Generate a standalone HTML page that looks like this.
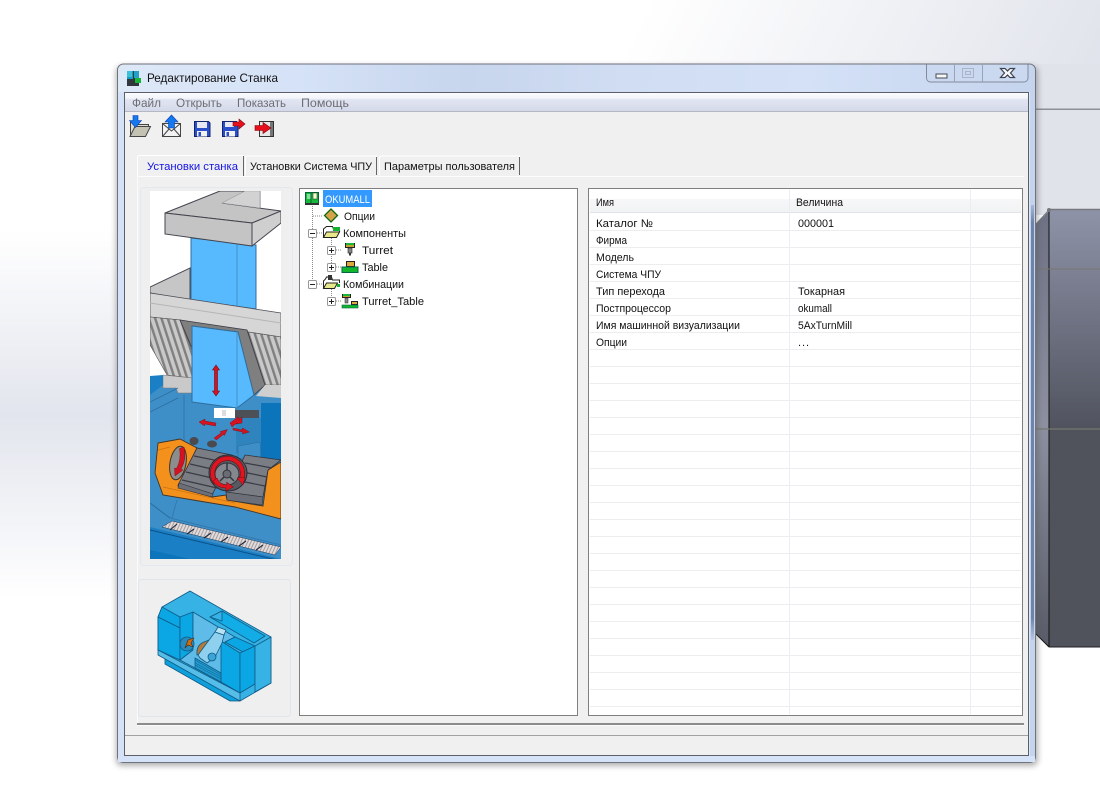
<!DOCTYPE html>
<html><head><meta charset="utf-8"><title>Редактирование Станка</title>
<style>
html,body{margin:0;padding:0;background:#fff;width:1100px;height:786px;overflow:hidden}
svg{display:block}
text{font-family:"Liberation Sans","Noto Sans CJK SC",sans-serif;font-size:11px;fill:#111}
</style></head><body>
<svg width="1100" height="786" viewBox="0 0 1100 786" xmlns="http://www.w3.org/2000/svg">
<defs>
<linearGradient id="leftbg" x1="0" y1="230" x2="0" y2="600" gradientUnits="userSpaceOnUse"><stop offset="0" stop-color="#fff"/><stop offset=".5" stop-color="#e2e5ed"/><stop offset="1" stop-color="#fff"/></linearGradient>
<linearGradient id="trbg" x1="650" y1="0" x2="1040" y2="200" gradientUnits="userSpaceOnUse"><stop offset="0" stop-color="#fff"/><stop offset="1" stop-color="#e0e3eb"/></linearGradient>
<linearGradient id="front" x1="0" y1="210" x2="0" y2="430" gradientUnits="userSpaceOnUse"><stop offset="0" stop-color="#8e93a8"/><stop offset="1" stop-color="#50535e"/></linearGradient>
<linearGradient id="side" x1="0" y1="210" x2="0" y2="640" gradientUnits="userSpaceOnUse"><stop offset="0" stop-color="#6d7184"/><stop offset=".5" stop-color="#8d90a0"/><stop offset="1" stop-color="#5a5d69"/></linearGradient>
<linearGradient id="glass" x1="117" y1="64" x2="1036" y2="120" gradientUnits="userSpaceOnUse"><stop offset="0" stop-color="#dde8f7"/><stop offset=".2" stop-color="#d5e2f7"/><stop offset=".38" stop-color="#c7d5ed"/><stop offset=".55" stop-color="#d0ddf3"/><stop offset=".75" stop-color="#d4e1f7"/><stop offset="1" stop-color="#c5d4ed"/></linearGradient>
<linearGradient id="menu" x1="0" y1="93" x2="0" y2="111" gradientUnits="userSpaceOnUse"><stop offset="0" stop-color="#fbfcfe"/><stop offset=".3" stop-color="#f2f4fa"/><stop offset=".35" stop-color="#e2e6f3"/><stop offset="1" stop-color="#d4d9ea"/></linearGradient>
<linearGradient id="hdr" x1="0" y1="190" x2="0" y2="212" gradientUnits="userSpaceOnUse"><stop offset="0" stop-color="#fff"/><stop offset=".4" stop-color="#fff"/><stop offset=".42" stop-color="#f6f7f8"/><stop offset="1" stop-color="#f2f3f4"/></linearGradient>
<linearGradient id="rframe" x1="0" y1="200" x2="0" y2="640" gradientUnits="userSpaceOnUse"><stop offset="0" stop-color="#b8c8e6"/><stop offset=".05" stop-color="#6f84ac"/><stop offset=".95" stop-color="#6f84ac"/><stop offset="1" stop-color="#b8c8e6"/></linearGradient>
<filter id="sh" x="-5%" y="-5%" width="110%" height="110%"><feGaussianBlur stdDeviation="3"/></filter>
<clipPath id="c1"><rect x="150" y="191" width="131" height="368"/></clipPath>
<pattern id="hatch" width="6" height="6" patternUnits="userSpaceOnUse" patternTransform="rotate(-18)"><rect width="6" height="6" fill="#c9c9c9"/><rect width="2.400" height="6" fill="#808080"/></pattern>
<pattern id="rail" width="3" height="3" patternUnits="userSpaceOnUse" patternTransform="rotate(25)"><rect width="3" height="3" fill="#e0dcdc"/><rect width="1" height="3" fill="#a59a9e"/></pattern>
</defs>

<!-- desktop background -->
<rect width="1100" height="786" fill="#fff"/>
<rect x="0" y="230" width="125" height="370" fill="url(#leftbg)"/>
<rect x="400" y="0" width="700" height="215" fill="url(#trbg)"/>
<rect x="1036" y="64" width="64" height="150" fill="#e1e3eb"/>
<rect x="1036" y="108.500" width="64" height="1.500" fill="#8f9096"/>
<!-- solid at right -->
<polygon points="1036,224 1049,211 1049,647 1036,634" fill="url(#side)"/>
<rect x="1049" y="210" width="51" height="437" fill="url(#front)"/>
<rect x="1049" y="430" width="51" height="217" fill="#50525c"/>
<line x1="1049" y1="209.500" x2="1100" y2="209.500" stroke="#77787c" stroke-width="1.500"/>
<line x1="1036" y1="224" x2="1049" y2="210" stroke="#77787c" stroke-width="1"/>
<line x1="1049" y1="210" x2="1049" y2="647" stroke="#111" stroke-width="1"/>
<line x1="1036" y1="634" x2="1049" y2="647" stroke="#111" stroke-width="1"/>
<line x1="1049" y1="647" x2="1100" y2="647" stroke="#222" stroke-width="1"/>
<line x1="1036" y1="269" x2="1100" y2="269" stroke="#77776f" stroke-width="1"/>
<line x1="1036" y1="429" x2="1100" y2="429" stroke="#77776f" stroke-width="1.200"/>
<circle cx="1049" cy="210" r="2" fill="#77787c"/>

<!-- window shadow and frame -->
<rect x="116" y="66" width="922" height="700" rx="6" fill="#555" opacity=".45" filter="url(#sh)"/>
<rect x="117.500" y="64" width="918" height="698.500" rx="6" fill="url(#glass)" stroke="#70737c"/>
<rect x="1031" y="205" width="3" height="435" fill="url(#rframe)"/>
<rect x="118" y="92" width="6" height="670" fill="#d4e1f6"/>
<rect x="1029" y="92" width="1" height="670" fill="#dbe6f8"/>
<rect x="118" y="756" width="917" height="6" fill="#d5e2f8"/>
<rect x="124.500" y="92.500" width="904" height="663" fill="#f0f0f0" stroke="#5c5f68"/>
<rect x="125" y="93" width="903" height="18" fill="url(#menu)"/>
<line x1="125" y1="111.500" x2="1028" y2="111.500" stroke="#b5b8c2"/>

<!-- title bar -->
<g>
<rect x="127" y="71" width="6" height="15" fill="#159bc4"/><rect x="133" y="71" width="6" height="15" fill="#2f3a33"/>
<rect x="127" y="71" width="5" height="6" fill="#3ac0d8"/><rect x="134" y="71" width="5" height="7" fill="#27a0c8"/>
<rect x="127" y="79" width="12" height="7" fill="#30363c"/><rect x="135" y="78" width="6" height="5" fill="#16b53a"/>
</g>
<text x="147" y="82" style="font-size:12px" textLength="131" lengthAdjust="spacingAndGlyphs" fill="#111">Редактирование Станка</text>
<path d="M926.500 64.500V78a4 4 0 0 0 4 4H1024a4 4 0 0 0 4-4V64.500" fill="#cbd9f0" stroke="#838a9c"/>
<line x1="954.500" y1="64" x2="954.500" y2="82" stroke="#9aa3b6"/><line x1="982.500" y1="64" x2="982.500" y2="82" stroke="#9aa3b6"/>
<rect x="936" y="74" width="11" height="4" fill="#f7f7f7" stroke="#454a58"/>
<rect x="962.500" y="68.500" width="11" height="9" fill="none" stroke="#a9b3c8"/><rect x="965.500" y="71.500" width="5" height="3" fill="none" stroke="#a9b3c8"/>
<path d="M1000.500 68.500h4.500l2.500 2.500 2.500-2.500h4.500l-4 4.500 4 4.500h-4.500l-2.500-2.500-2.500 2.500h-4.500l4-4.500z" fill="#f8f8fa" stroke="#3c4350" stroke-width="1.200"/>

<!-- menu -->
<text x="132" y="107" style="font-size:12px;fill:#6d6d72" textLength="29" lengthAdjust="spacingAndGlyphs">Файл</text>
<text x="176" y="107" style="font-size:12px;fill:#6d6d72" textLength="46" lengthAdjust="spacingAndGlyphs">Открыть</text>
<text x="237" y="107" style="font-size:12px;fill:#6d6d72" textLength="49" lengthAdjust="spacingAndGlyphs">Показать</text>
<text x="301" y="107" style="font-size:12px;fill:#6d6d72" textLength="48" lengthAdjust="spacingAndGlyphs">Помощь</text>

<!-- toolbar icons -->
<g stroke-linejoin="miter">
<!-- open -->
<path d="M130.500 136.500V122.500h6l2 2h10v3" fill="#dcdccf" stroke="#444"/>
<path d="M130 136.500l5-10h15.500l-5 10z" fill="#c4c2b2" stroke="#444"/>
<path d="M133 115.500h5v5h3.500l-6 7-6-7h3.500z" fill="#1478f0" stroke="#0a3fb0" stroke-width=".6"/>
<!-- mail -->
<rect x="162.500" y="123.500" width="18" height="13" fill="#f3f3f3" stroke="#444"/>
<path d="M162.500 123.500l9 7.500 9-7.500M162.500 136.500l7-8M180.500 136.500l-7-8" fill="none" stroke="#444"/>
<path d="M171.500 115l6.500 7h-3.500v6h-6v-6H165z" fill="#1478f0" stroke="#0a3fb0" stroke-width=".6"/>
<!-- save -->
<path d="M194.500 121.500h14l1.500 1.500v13.500h-15.500z" fill="#2b4fc9" stroke="#12236e"/>
<rect x="197" y="122" width="10" height="6" fill="#e8e8f4"/>
<rect x="197" y="131" width="10" height="5.500" fill="#f2f2f2"/><rect x="198.500" y="132" width="2.500" height="4" fill="#2b4fc9"/>
<!-- save as -->
<path d="M222.500 121.500h14l1.500 1.500v13.500h-15.500z" fill="#2b4fc9" stroke="#12236e"/>
<rect x="225" y="122" width="9" height="5" fill="#e8e8f4"/>
<rect x="225" y="131" width="10" height="5.500" fill="#f2f2f2"/><rect x="226.500" y="132" width="2.500" height="4" fill="#2b4fc9"/>
<path d="M233 122h6v-3l6 5-6 5v-3h-6z" fill="#e8101c" stroke="#7a0a10" stroke-width=".6"/>
<!-- exit -->
<rect x="259.500" y="121.500" width="14" height="15" fill="#e7e7e7" stroke="#333"/>
<rect x="270" y="122" width="3" height="14" fill="#777"/>
<path d="M255 125.500h8V122.500l8 5.500-8 5.500v-3h-8z" fill="#e8101c" stroke="#7a0a10" stroke-width=".6"/>
</g>

<!-- tabs -->
<line x1="137" y1="176.500" x2="1024" y2="176.500" stroke="#fcfcfc"/>
<line x1="137.500" y1="176" x2="137.500" y2="724" stroke="#fbfbfb"/>
<path d="M137.500 176V158q0-2.500 2.500-2.500H243.500V176" fill="#f0f0f0" stroke="#fff"/>
<line x1="243.500" y1="156" x2="243.500" y2="176" stroke="#666"/>
<path d="M245.500 175V158q0-2 2-2H376.500V175" fill="#f0f0f0" stroke="#fff"/>
<line x1="376.500" y1="157" x2="376.500" y2="175" stroke="#666"/>
<path d="M379.500 175V158q0-2 2-2H519.500V175" fill="#f0f0f0" stroke="#fff"/>
<line x1="519.500" y1="157" x2="519.500" y2="175" stroke="#666"/>
<text x="147" y="170" style="fill:#1414e6" textLength="91" lengthAdjust="spacingAndGlyphs">Установки станка</text>
<text x="250" y="170" textLength="122" lengthAdjust="spacingAndGlyphs">Установки Система ЧПУ</text>
<text x="384" y="170" textLength="131" lengthAdjust="spacingAndGlyphs">Параметры пользователя</text>

<!-- bottom lines -->
<line x1="137" y1="724" x2="1024" y2="724" stroke="#6a6a6a" stroke-width="1.500"/>
<line x1="137" y1="725.500" x2="1024" y2="725.500" stroke="#fafafa"/>
<line x1="125" y1="735.500" x2="1028" y2="735.500" stroke="#a2a2a2"/>

<!-- picture panels -->
<rect x="140.500" y="187.500" width="152" height="378" rx="3" fill="#efefef" stroke="#e3e8ee"/>
<rect x="138.500" y="579.500" width="152" height="137" rx="3" fill="#efefef" stroke="#dfe5ec"/>

<!-- machine image 1 -->
<g clip-path="url(#c1)">
<rect x="150" y="191" width="131" height="368" fill="#fff"/>
<polygon points="150,287 190,268 190,300 150,293" fill="#c6c6c6" stroke="#4a4a55"/>
<polygon points="191,238 256,245 256,309 191,300" fill="#57baff" stroke="#2f6f9e"/>
<line x1="237" y1="241" x2="237" y2="306" stroke="#4a8fc4"/>
<polygon points="165,213 220,191 260,191 260,208 222,203 281,211 252,223" fill="#c4c4c4" stroke="#44444f"/>
<polygon points="222,203 245,191 260,191 260,208" fill="#d2d2d2" stroke="#9a9aa2" stroke-width=".6"/>
<polygon points="165,213 252,223 252,246 165,234" fill="#c4c4c4" stroke="#44444f"/>
<polygon points="252,223 281,211 281,223 252,246" fill="#cfcfcf" stroke="#44444f"/>
<!-- lower blue -->
<rect x="150" y="380" width="131" height="179" fill="#3e8fc7"/>
<polygon points="150,293 281,313 281,337 248,332 180,320 150,317" fill="#d6d6d6" stroke="#4a4a55" stroke-width=".8"/>
<line x1="150" y1="303" x2="281" y2="323" stroke="#b5b5b5"/>
<polygon points="150,317 180,320 192,350 192,378 167,375 150,345" fill="url(#hatch)" stroke="#555" stroke-width=".6"/>
<polygon points="248,332 281,337 281,385 265,385" fill="url(#hatch)" stroke="#555" stroke-width=".6"/>
<polygon points="180,320 247,330 265,385 254,395 238,332 192,326 192,348" fill="#7f7f7f" stroke="#3a3a46" stroke-width=".8"/>
<polygon points="163,375 192,378 192,393 178,393 176,388 163,388" fill="#c9c9c9" stroke="#777" stroke-width=".5"/>
<polygon points="265,385 281,385 281,398 256,396" fill="#cfcfcf"/>
<polygon points="150,376 163,375 163,385 150,395" fill="#1a7fc4"/>
<polygon points="192,326 238,332 254,395 237,408 192,402" fill="#57baff" stroke="#2f6f9e"/>
<line x1="237" y1="332" x2="237" y2="408" stroke="#4a8fc4"/>
<rect x="261" y="403" width="20" height="57" fill="#0b74bb"/>
<path d="M150 402L178 388M150 412L178 398M184 395V445" stroke="#2c6c9e" stroke-width=".7" fill="none"/>
<rect x="214" y="408" width="21" height="10" fill="#fff"/>
<rect x="235" y="410" width="24" height="8" fill="#4e5058"/>
<rect x="222" y="410" width="4" height="6" fill="#ddd"/>
<rect x="236" y="418" width="25" height="35" fill="#2f84be"/>
<polygon points="238,446 260,442 261,460 238,458" fill="#3e8fc7" stroke="#2b6d9e" stroke-width=".6"/>
<!-- red move arrows -->
<path d="M216 365l3.500 5h-2v21h2l-3.500 5-3.500-5h2v-21h-2z" fill="#d51220" stroke="#6c1018" stroke-width=".6"/>
<path d="M199 422l6-3v2l11 2-.5 3-11-2v2z" fill="#d51220" stroke="#6c1018" stroke-width=".4"/>
<path d="M230 423l8-6 2 2-1 1 3-3v6l-6 1 1-1-5 4z" fill="#d51220" stroke="#6c1018" stroke-width=".4"/>
<path d="M233 428l9 2 .4-2 7 4-7 2 .4-2-9.800-2z" fill="#d51220" stroke="#6c1018" stroke-width=".4"/>
<path d="M211 434l7-5-.6-1.500 7-2-3 6-1-1-7 5.500z" fill="#d51220" transform="translate(3,4)" stroke="#6c1018" stroke-width=".4"/>
<!-- orange body -->
<polygon points="155,473 158,443 180,439 197,448 178,486 212,497 226,495 227,500 263,506 268,470 281,462 281,519 235,507 163,495" fill="#f4901c" stroke="#40352a" stroke-width=".9"/>
<path d="M163 487L235 503M158 450L170 447" stroke="#c9740f" stroke-width=".7" fill="none"/>
<ellipse cx="178" cy="463" rx="8" ry="17" transform="rotate(10 178 463)" fill="#8d8d8d" stroke="#40352a"/>
<path d="M184 447q3 12-3 22l2 1-8 6-.5-8 2 .5q5-9 3-20z" fill="#d51220" stroke="#6c1018" stroke-width=".4"/>
<ellipse cx="194" cy="441" rx="4.500" ry="4" fill="#4a4a4f"/><ellipse cx="212" cy="444" rx="5" ry="3.500" fill="#4a4a4f"/>
<!-- table -->
<polygon points="178,485 197,448 232,455 212,495" fill="#7b7d85" stroke="#30313a" stroke-width=".8"/>
<g stroke="#3a3b44" stroke-width="1.200"><line x1="194" y1="456" x2="229" y2="463"/><line x1="190" y1="464" x2="225" y2="472"/><line x1="186" y1="472" x2="221" y2="480"/><line x1="182" y1="480" x2="217" y2="488"/></g>
<polygon points="245,455 281,460 268,470 263,497 226,492 238,470" fill="#7b7d85" stroke="#30313a" stroke-width=".8"/>
<g stroke="#3a3b44" stroke-width="1.200"><line x1="245" y1="463" x2="272" y2="468"/><line x1="243" y1="472" x2="267" y2="477"/><line x1="240" y1="481" x2="265" y2="486"/></g>
<polygon points="226,492 263,497 262,505 227,500" fill="#6d6f78" stroke="#30313a" stroke-width=".6"/>
<polygon points="179,483 213,494 212,497 178,488" fill="#6d6f78" stroke="#30313a" stroke-width=".6"/>
<ellipse cx="228" cy="473" rx="19" ry="18" fill="#585a62" stroke="#2a2b33"/>
<ellipse cx="227" cy="474" rx="12" ry="11" fill="#85878f" stroke="#33343c"/>
<circle cx="227" cy="474" r="4" fill="#6a6c74" stroke="#33343c"/>
<path d="M227 463V470M220 481L224 477M234 481L230 477" stroke="#33343c" stroke-width="1.500"/>
<path d="M216 483A15 15 0 1 1 241 480" fill="none" stroke="#6c1018" stroke-width="5"/>
<path d="M216 483A15 15 0 1 1 241 480" fill="none" stroke="#df1520" stroke-width="3.800"/>
<path d="M237 478l8-1-2 8z" fill="#df1520" stroke="#6c1018" stroke-width=".5"/>
<path d="M217 478q3 7 10 7l-.5-3 7 5-8 4 .5-3q-9 0-13-7z" fill="#df1520" stroke="#6c1018" stroke-width=".5"/>
<!-- lower base -->
<polygon points="150,527 281,559 150,559" fill="#1a7fc4"/>
<line x1="150" y1="530" x2="281" y2="561" stroke="#0d4f86"/>
<polygon points="150,550 190,559 150,559" fill="#0b74bb"/>
<polygon points="162,527 172,521 281,547 275,555" fill="url(#rail)" stroke="#1a3a5c" stroke-width=".5"/>
<path d="M177 524L170 530M194 529L187 534M211 533L204 538M228 537L221 542M246 541L239 546M263 545L256 550" stroke="#1e2a3a" stroke-width="1.100"/>
<line x1="150" y1="503" x2="170" y2="518" stroke="#2c6c9e"/>
<line x1="170" y1="518" x2="281" y2="545" stroke="#2c6c9e" opacity=".6"/>
<line x1="177" y1="500" x2="172" y2="518" stroke="#2c6c9e" opacity=".6"/>
</g>

<!-- machine image 2 (lathe) -->
<g stroke="#0f5a85" stroke-width=".8" stroke-linejoin="round">
<polygon points="165,656 165,664 230,701 240,701 240,695" fill="#0f9fdb"/>
<polygon points="158,650 158,617 162,607 190,591 271,637 271,683 240,701" fill="#36b2e4"/>
<polygon points="158,617 162,607 180,617 180,628" fill="#0ba6e4"/>
<polygon points="158,617 180,628 180,660 158,650" fill="#0ba6e4"/>
<polygon points="180,617 193,612 193,650 180,660" fill="#0ba6e4"/>
<polygon points="158,650 240,693 240,701 158,655" fill="#55bde8"/>
<polygon points="193,612 235,637 225,642 221,682 180,660 193,650" fill="#5fbce8"/>
<polygon points="210,617 222,611 265,636 254,643" fill="#12ace6"/>
<polygon points="210,617 222,611 222,621" fill="#36b2e4"/>
<polygon points="225,642 235,637 255,646 243,652" fill="#0ba6e4"/>
<polygon points="221,641 240,653 240,693 221,682" fill="#0ba6e4"/>
<polygon points="240,653 255,646 255,684 240,693" fill="#0ba6e4"/>
<polygon points="255,646 271,637 271,683 255,692" fill="#36b2e4"/>
<polygon points="195,658 221,673 221,682 195,668" fill="#1f9bd0"/>
<g stroke="#146a96" stroke-width=".7"><line x1="195" y1="660" x2="221" y2="675"/><line x1="195" y1="663" x2="221" y2="677"/><line x1="195" y1="665" x2="221" y2="679"/></g>
<circle cx="187" cy="644" r="7" fill="#2a8cbc"/>
<path d="M188 640l6-2-3 5 2 4-5-2-3 3z" fill="#d06a10" stroke="#3a2a1a" stroke-width=".6"/>
<path d="M197 655q-1-10 7-13l5-2-3 12z" fill="#b57a3a" stroke="#0f5a85"/>
<polygon points="198,655 215,632 224,635 222,643 215,657 207,663 200,658" fill="#8fd0ee"/>
<polygon points="215,632 218,627 226,630 224,635" fill="#b8e2f4"/>
<ellipse cx="212" cy="657" rx="4" ry="4" fill="#3aa6d6"/>
</g>

<!-- tree box -->
<rect x="299.500" y="188.500" width="278" height="527" fill="#fff" stroke="#7f7f7f"/>
<rect x="323" y="190" width="49" height="17" fill="#3399ff"/>
<g stroke="#8a8a8a" stroke-dasharray="1 1" fill="none">
<path d="M312.500 206V284M313 216H323M317 233H323M317 284H323M331.500 238V267M336 250H342M336 267H342M331.500 289V301M336 301H342"/>
</g>
<g fill="#fff" stroke="#979797">
<rect x="308.500" y="229.500" width="8" height="8" rx="1"/><rect x="308.500" y="280.500" width="8" height="8" rx="1"/>
<rect x="327.500" y="246.500" width="8" height="8" rx="1"/><rect x="327.500" y="263.500" width="8" height="8" rx="1"/><rect x="327.500" y="297.500" width="8" height="8" rx="1"/>
</g>
<g stroke="#222"><path d="M310 233.500h5M310 284.500h5M329 250.500h5M329 267.500h5M329 301.500h5M331.500 248v5M331.500 265v5M331.500 299v5" fill="none"/></g>
<!-- tree icons -->
<rect x="305.500" y="192.500" width="13" height="11" fill="#18b83a" stroke="#063"/>
<rect x="307" y="194" width="4" height="5" fill="#fff" opacity=".5"/><rect x="313" y="193" width="4" height="6" fill="#f8f8d0" stroke="#333" stroke-width=".5"/>
<rect x="305" y="203" width="14" height="2" fill="#333"/>
<line x1="311" y1="192" x2="311" y2="203" stroke="#063"/>
<polygon points="331,209 337.500,215.500 331,222 324.500,215.500" fill="#d6a34a" stroke="#0a6a0a" stroke-width="1.300"/>
<!-- folder Компоненты -->
<path d="M323.500 237v-8l3-2.500h6l1 2.500h6v3" fill="#fff" stroke="#222"/><rect x="333" y="227" width="7" height="4" fill="#14b32f"/>
<path d="M323.500 237.500l3-5.500h13l-3 5.500z" fill="#e8e88a" stroke="#222"/>
<path d="M323.500 288v-7l2-2 1-2h5l1 3h7v3" fill="#fff" stroke="#222"/><rect x="328" y="275" width="4" height="5" fill="#333"/><rect x="337" y="284" width="3" height="3" fill="#14b32f"/>
<path d="M323.500 288.500l3-5.500h11l-3 5.500z" fill="#e8e88a" stroke="#222"/>
<!-- Turret -->
<rect x="345.500" y="243.500" width="9" height="4" fill="#c4a030" stroke="#222"/><rect x="346" y="243" width="8" height="2" fill="#17b53a"/>
<rect x="348" y="248" width="4" height="5" fill="#888" stroke="#222" stroke-width=".6"/><rect x="349" y="253" width="2" height="2.500" fill="#333"/>
<!-- Table -->
<rect x="346.500" y="261.500" width="8" height="5" fill="#e0a838" stroke="#222"/>
<rect x="342" y="267" width="16" height="5.500" fill="#12b52e" stroke="#064"/>
<!-- Turret_Table -->
<rect x="342.500" y="294.500" width="8" height="3" fill="#c4a030" stroke="#222"/><rect x="343" y="294" width="7" height="2" fill="#17b53a"/>
<rect x="345" y="298" width="3" height="5" fill="#888" stroke="#222" stroke-width=".5"/>
<rect x="351.500" y="301.500" width="6" height="3" fill="#e0a838" stroke="#222"/>
<rect x="342" y="305" width="16" height="3" fill="#12b52e" stroke="#064" stroke-width=".6"/>
<!-- tree text -->
<text x="325" y="203" style="fill:#fff" textLength="45" lengthAdjust="spacingAndGlyphs">OKUMALL</text>
<text x="344" y="220" textLength="31" lengthAdjust="spacingAndGlyphs">Опции</text>
<text x="343" y="237" textLength="63" lengthAdjust="spacingAndGlyphs">Компоненты</text>
<text x="362" y="254" textLength="31" lengthAdjust="spacingAndGlyphs">Turret</text>
<text x="362" y="271" textLength="26" lengthAdjust="spacingAndGlyphs">Table</text>
<text x="343" y="288" textLength="61" lengthAdjust="spacingAndGlyphs">Комбинации</text>
<text x="362" y="305" textLength="62" lengthAdjust="spacingAndGlyphs">Turret_Table</text>

<!-- grid -->
<rect x="588.500" y="188.500" width="434" height="527" fill="#fff" stroke="#7f7f7f"/>
<rect x="590" y="190" width="431" height="22" fill="url(#hdr)"/>
<line x1="590" y1="212.500" x2="1021" y2="212.500" stroke="#dfe2e6"/>
<g stroke="#ededed">
<path d="M590 230.500H1021M590 247.500H1021M590 264.500H1021M590 281.500H1021M590 298.500H1021M590 315.500H1021M590 332.500H1021M590 349.500H1021M590 366.500H1021M590 383.500H1021M590 400.500H1021M590 417.500H1021M590 434.500H1021M590 451.500H1021M590 468.500H1021M590 485.500H1021M590 502.500H1021M590 519.500H1021M590 536.500H1021M590 553.500H1021M590 570.500H1021M590 587.500H1021M590 604.500H1021M590 621.500H1021M590 638.500H1021M590 655.500H1021M590 672.500H1021M590 689.500H1021M590 706.500H1021"/>
</g>
<g stroke="#e9eef6"><path d="M789.500 190V714M970.500 190V714"/></g>
<text x="596" y="206" textLength="18" lengthAdjust="spacingAndGlyphs">Имя</text>
<text x="796" y="206" textLength="47" lengthAdjust="spacingAndGlyphs">Величина</text>
<text x="596" y="227" textLength="57" lengthAdjust="spacingAndGlyphs">Каталог №</text>
<text x="596" y="244" textLength="31" lengthAdjust="spacingAndGlyphs">Фирма</text>
<text x="596" y="261" textLength="38" lengthAdjust="spacingAndGlyphs">Модель</text>
<text x="596" y="278" textLength="65" lengthAdjust="spacingAndGlyphs">Система ЧПУ</text>
<text x="596" y="295" textLength="69" lengthAdjust="spacingAndGlyphs">Тип перехода</text>
<text x="596" y="312" textLength="75" lengthAdjust="spacingAndGlyphs">Постпроцессор</text>
<text x="596" y="329" textLength="144" lengthAdjust="spacingAndGlyphs">Имя машинной визуализации</text>
<text x="596" y="346" textLength="31" lengthAdjust="spacingAndGlyphs">Опции</text>
<text x="798" y="227" textLength="36" lengthAdjust="spacingAndGlyphs">000001</text>
<text x="798" y="295" textLength="47" lengthAdjust="spacingAndGlyphs">Токарная</text>
<text x="798" y="312" textLength="34" lengthAdjust="spacingAndGlyphs">okumall</text>
<text x="798" y="329" textLength="54" lengthAdjust="spacingAndGlyphs">5AxTurnMill</text>
<text x="798" y="346" textLength="11" lengthAdjust="spacing">...</text>
</svg>
</body></html>
